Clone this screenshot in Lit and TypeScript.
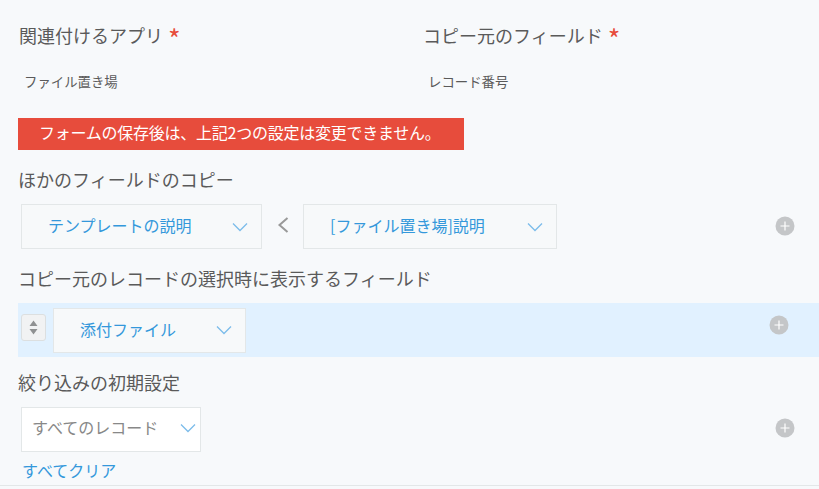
import { html, css, LitElement } from 'lit';
import { customElement, property } from 'lit/decorators.js';

@customElement('app-select')
export class AppSelect extends LitElement {
    static styles = css`
        :host {
            display: block;
            box-sizing: border-box;
            height: 45px;
            border: 1px solid #e3e7e8;
            background: #f7f9fa;
        }

        .inner {
            height: 100%;
            display: flex;
            align-items: center;
            justify-content: space-between;
            box-sizing: border-box;
            padding: 0 13px 0 26px;
            font-size: 16px;
            color: #3498db;
            white-space: nowrap;
        }

        span {
            margin-bottom: var(--text-lift, 4px);
        }

        :host([muted]) {
            background: #fff;
        }

        :host([muted]) .inner {
            padding: 0 4px 0 10px;
            color: #888;
        }

        :host([muted]) span {
            margin-bottom: 6px;
        }

        :host([muted]) svg {
            margin-bottom: 4px;
        }

        svg {
            width: 16px;
            height: 10px;
            flex: none;
        }
    `

    @property({ type: String }) label = '';

    render() {
        return html`
            <div class="inner">
                <span>${this.label}</span>
                <svg viewBox="0 0 16 10"><path d="M1 1.500 8 8.500 15 1.500" fill="none" stroke="#7cbcea" stroke-width="1.3" /></svg>
            </div>
        `
    }
}

@customElement('app-add')
export class AppAdd extends LitElement {
    static styles = css`
        :host {
            display: block;
            width: 20px;
            height: 20px;
        }

        svg {
            display: block;
        }
    `

    render() {
        return html`
            <svg width="20" height="20" viewBox="0 0 20 20">
                <circle cx="10" cy="10" r="9.500" fill="#c4c6c8" />
                <path d="M10 5.500v9M5.500 10h9" stroke="#fff" stroke-width="1.200" />
            </svg>
        `
    }
}

@customElement('app-root')
export class AppRoot extends LitElement {
    static styles = css`
        :host {
            display: block;
            box-sizing: border-box;
            height: 489px;
            overflow: hidden;
            background: #f7f9fb;
            font-family: "Noto Sans CJK JP", "Noto Sans", sans-serif;
            color: #5a5a5a;
        }

        .page {
            height: 486px;
            box-sizing: border-box;
            border-bottom: 1px solid #e3e7e8;
            padding-top: 22px;
            overflow: hidden;
        }

        .top {
            display: grid;
            grid-template-columns: 404px 1fr;
            padding-left: 19px;
        }

        .title {
            height: 27px;
            line-height: 27px;
            font-size: 18px;
        }

        .star {
            color: #e74c3c;
            font-size: 27px;
            line-height: 0;
            vertical-align: -7px;
            margin-left: 1px;
        }

        .value {
            margin: 22px 0 0 5px;
            height: 20px;
            line-height: 20px;
            font-size: 13.400px;
        }

        .alert {
            box-sizing: border-box;
            width: 446px;
            height: 32px;
            line-height: 29px;
            margin: 27px 0 0 18px;
            padding-left: 21px;
            background: #e74c3c;
            color: #fff;
            font-size: 16px;
            letter-spacing: -0.25px;
            white-space: nowrap;
        }

        .heading {
            margin: 16px 0 0 18px;
            height: 26px;
            line-height: 26px;
            font-size: 18px;
        }

        .heading.filter {
            margin-top: 12px;
        }

        .row {
            display: flex;
            align-items: center;
            padding: 0 24px 0 21px;
        }

        .row app-add {
            margin-left: auto;
            margin-bottom: 2px;
        }

        .copy {
            margin-top: 12px;
        }

        .filter-row {
            margin-top: 12px;
        }

        .filter-row app-add {
            margin-bottom: 4px;
        }

        .arrow {
            width: 41px;
            height: 16px;
            margin-bottom: 4px;
        }

        .band {
            display: flex;
            align-items: center;
            height: 54px;
            margin: 12px 0 0 18px;
            padding: 0 30px 0 3px;
            background: #e1f1ff;
            --text-lift: 2px;
        }

        .band app-add {
            margin: 0 0 10px auto;
        }

        .sorter {
            box-sizing: border-box;
            width: 25px;
            height: 27px;
            margin: -5px 7px 0 0;
            border: 1px solid #dcdfe0;
            border-radius: 3px;
            background: #f1f2f3;
            display: flex;
            align-items: center;
            justify-content: center;
        }

        a {
            display: block;
            margin: 7px 0 0 22px;
            height: 22px;
            line-height: 22px;
            font-size: 16px;
            color: #3498db;
        }
    `

    render() {
        return html`
            <div class="page">
                <div class="top">
                    <div>
                        <div class="title">関連付けるアプリ <span class="star">*</span></div>
                        <div class="value">ファイル置き場</div>
                    </div>
                    <div>
                        <div class="title">コピー元のフィールド <span class="star">*</span></div>
                        <div class="value">レコード番号</div>
                    </div>
                </div>
                <div class="alert">フォームの保存後は、上記2つの設定は変更できません。</div>
                <div class="heading">ほかのフィールドのコピー</div>
                <div class="row copy">
                    <app-select style="width: 241px" label="テンプレートの説明"></app-select>
                    <svg class="arrow" viewBox="0 0 41 16"><path d="M25.500 1 17.500 8l8 7" fill="none" stroke="#999" stroke-width="2" /></svg>
                    <app-select style="width: 254px" label="[ファイル置き場]説明"></app-select>
                    <app-add></app-add>
                </div>
                <div class="heading">コピー元のレコードの選択時に表示するフィールド</div>
                <div class="band">
                    <div class="sorter">
                        <svg width="9" height="15" viewBox="0 0 9 15"><path d="M4.500 .5 8.500 6H.5ZM.5 9h8l-4 5.500Z" fill="#8f9192" /></svg>
                    </div>
                    <app-select style="width: 193px" label="添付ファイル"></app-select>
                    <app-add></app-add>
                </div>
                <div class="heading filter">絞り込みの初期設定</div>
                <div class="row filter-row">
                    <app-select muted style="width: 180px" label="すべてのレコード"></app-select>
                    <app-add></app-add>
                </div>
                <a>すべてクリア</a>
            </div>
        `
    }
}
